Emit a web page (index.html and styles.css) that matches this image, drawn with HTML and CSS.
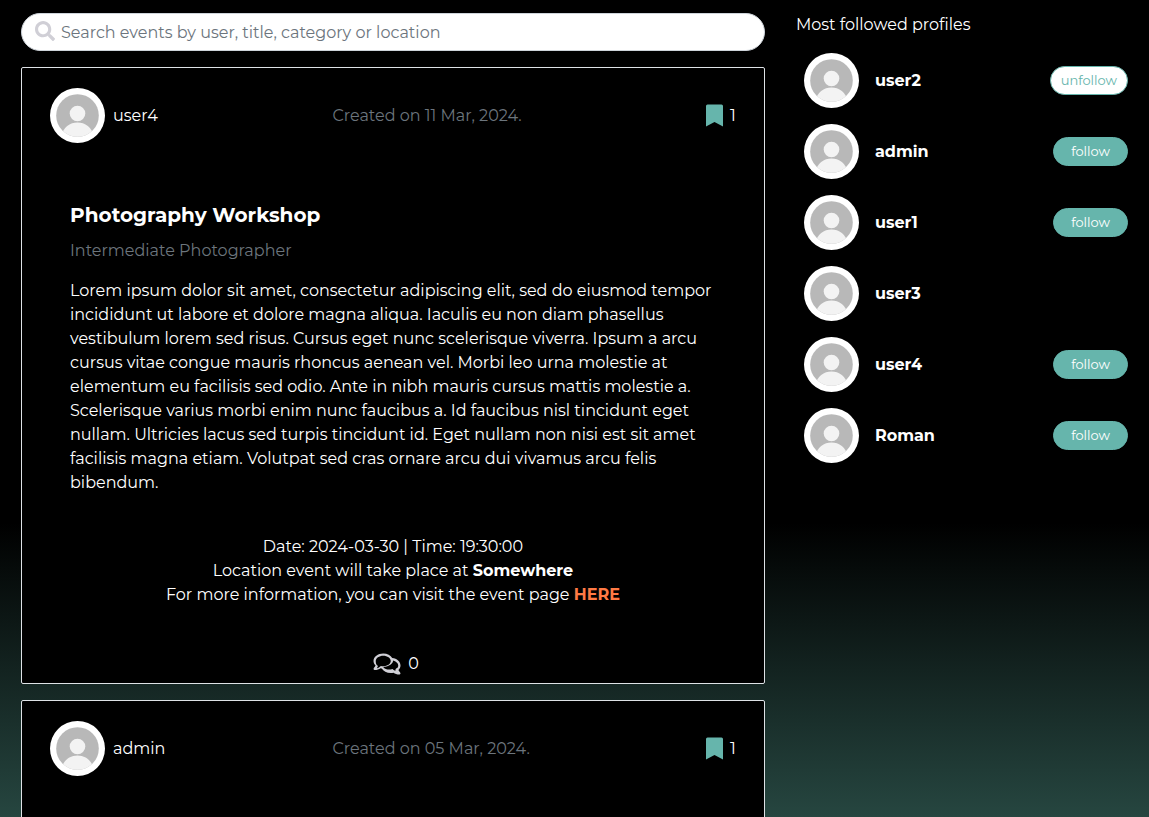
FILE: index.html
```html
<!DOCTYPE html>
<html lang="en">
<head>
<meta charset="utf-8">
<title>Events</title>
<link rel="stylesheet" href="styles.css">
</head>
<body>
<svg class="sprite" aria-hidden="true">
  <symbol id="avatar" viewBox="0 0 55 55">
    <clipPath id="disc"><circle cx="27.5" cy="27.5" r="21.3"/></clipPath>
    <circle cx="27.5" cy="27.5" r="27.5" fill="#fff"/>
    <circle cx="27.5" cy="27.5" r="21.3" fill="#b8b8b8"/>
    <g clip-path="url(#disc)" fill="#f3f3f3">
      <circle cx="27.5" cy="25.5" r="7.8"/>
      <path d="M11 49C13 39 20 34.5 27.5 34.5S42 39 44 49Z"/>
    </g>
  </symbol>
  <symbol id="bookmark" viewBox="0 0 17 23">
    <path d="M1.5 0.5H15.5Q17 0.5 17 2V22.5L8.5 18L0 22.5V2Q0 0.5 1.5 0.5Z" fill="currentColor"/>
  </symbol>
  <symbol id="comments" viewBox="0 0 576 512">
    <path fill="currentColor" d="M532 386.200c27.500-27.100 44-61.100 44-98.200 0-80-76.500-146.100-176.200-157.900C368.300 72.500 294.300 32 208 32 93.100 32 0 103.600 0 192c0 37 16.500 71 44 98.200-15.300 30.700-37.300 54.500-37.700 54.900-6.300 6.700-8.100 16.500-4.400 25 3.600 8.500 12 14 21.200 14 53.500 0 96.700-20.200 125.200-38.800 9.200 2.100 18.700 3.700 28.400 4.900C208.100 407.600 281.800 448 368 448c20.800 0 40.800-2.400 59.800-6.800C456.300 459.700 499.400 480 553 480c9.200 0 17.500-5.500 21.200-14 3.600-8.500 1.900-18.300-4.400-25-.4-.3-22.500-24.100-37.800-54.800zM142.200 311l-20.300 13.200c-16.800 10.800-33.900 19-51.200 24.200 3.200-5.500 6.400-11.300 9.500-17.400l15.500-31.200-24.800-24.600C57.300 261.500 48 231.200 48 192c0-60.700 73.300-112 160-112s160 51.300 160 112-73.300 112-160 112c-16.500 0-33-1.900-49-5.600zM480.700 352l-15.500 31.100c3.100 6.100 6.300 12 9.500 17.500-17.300-5.200-34.400-13.400-51.200-24.200l-17.200-11.200-20 4.600c-16 3.700-32.500 5.600-49 5.600-54 0-102.200-20.100-131.300-49.700C338 309.500 416 240.900 416 192c0-3.900-.4-7.700-.7-11.500C478.600 194.900 528 238 528 288c0 27.100-14.200 46.500-22.500 54.700z"/>
  </symbol>
  <symbol id="search" viewBox="0 0 512 512">
    <path fill="currentColor" d="M505 442.700L405.300 343c-4.500-4.500-10.600-7-17-7H372c27.600-35.300 44-79.700 44-128C416 93.100 322.900 0 208 0S0 93.100 0 208s93.100 208 208 208c48.300 0 92.700-16.400 128-44v16.300c0 6.400 2.500 12.500 7 17l99.700 99.700c9.400 9.400 24.600 9.400 33.900 0l28.300-28.300c9.400-9.400 9.400-24.600.1-34zM208 336c-70.700 0-128-57.200-128-128 0-70.700 57.200-128 128-128 70.700 0 128 57.200 128 128 0 70.700-57.200 128-128 128z"/>
  </symbol>
</svg>
<div class="page">
  <main class="feed">
    <form class="search" role="search">
      <svg class="search-icon" aria-hidden="true"><use href="#search"/></svg>
      <input class="search-input" type="text" aria-label="Search events" placeholder="Search events by user, title, category or location">
    </form>
    <article class="card">
      <header class="card-head">
        <a class="author" href="#"><svg class="avatar" aria-hidden="true"><use href="#avatar"/></svg>user4</a>
        <span class="created">Created on 11 Mar, 2024.</span>
        <button class="save" type="button" aria-label="Saved 1"><svg class="bookmark" aria-hidden="true"><use href="#bookmark"/></svg>1</button>
      </header>
      <div class="card-body">
        <h2 class="title">Photography Workshop</h2>
        <p class="subtitle">Intermediate Photographer</p>
        <p class="text">Lorem ipsum dolor sit amet, consectetur adipiscing elit, sed do eiusmod tempor incididunt ut labore et dolore magna aliqua. Iaculis eu non diam phasellus vestibulum lorem sed risus. Cursus eget nunc scelerisque viverra. Ipsum a arcu cursus vitae congue mauris rhoncus aenean vel. Morbi leo urna molestie at elementum eu facilisis sed odio. Ante in nibh mauris cursus mattis molestie a. Scelerisque varius morbi enim nunc faucibus a. Id faucibus nisl tincidunt eget nullam. Ultricies lacus sed turpis tincidunt id. Eget nullam non nisi est sit amet facilisis magna etiam. Volutpat sed cras ornare arcu dui vivamus arcu felis bibendum.</p>
      </div>
      <div class="details">
        <p>Date: 2024-03-30 | Time: 19:30:00</p>
        <p>Location event will take place at <strong>Somewhere</strong></p>
        <p>For more information, you can visit the event page <a class="here" href="#">HERE</a></p>
      </div>
      <footer class="card-foot">
        <a class="comments" href="#" aria-label="0 comments"><svg class="comments-icon" aria-hidden="true"><use href="#comments"/></svg>0</a>
      </footer>
    </article>
    <article class="card card-next">
      <header class="card-head">
        <a class="author" href="#"><svg class="avatar" aria-hidden="true"><use href="#avatar"/></svg>admin</a>
        <span class="created">Created on 05 Mar, 2024.</span>
        <button class="save" type="button" aria-label="Saved 1"><svg class="bookmark" aria-hidden="true"><use href="#bookmark"/></svg>1</button>
      </header>
    </article>
  </main>
  <aside class="profiles">
    <p class="profiles-title">Most followed profiles</p>
    <ul class="profile-list">
      <li class="profile"><a class="profile-link" href="#"><svg class="avatar" aria-hidden="true"><use href="#avatar"/></svg>user2</a><button class="pill pill-light" type="button">unfollow</button></li>
      <li class="profile"><a class="profile-link" href="#"><svg class="avatar" aria-hidden="true"><use href="#avatar"/></svg>admin</a><button class="pill" type="button">follow</button></li>
      <li class="profile"><a class="profile-link" href="#"><svg class="avatar" aria-hidden="true"><use href="#avatar"/></svg>user1</a><button class="pill" type="button">follow</button></li>
      <li class="profile"><a class="profile-link" href="#"><svg class="avatar" aria-hidden="true"><use href="#avatar"/></svg>user3</a></li>
      <li class="profile"><a class="profile-link" href="#"><svg class="avatar" aria-hidden="true"><use href="#avatar"/></svg>user4</a><button class="pill" type="button">follow</button></li>
      <li class="profile"><a class="profile-link" href="#"><svg class="avatar" aria-hidden="true"><use href="#avatar"/></svg>Roman</a><button class="pill" type="button">follow</button></li>
    </ul>
  </aside>
</div>
</body>
</html>
```
FILE: styles.css
```css
* { box-sizing: border-box; }
body {
  margin: 0;
  color: #fff;
  background: #000;
  font: 16px/24px Montserrat, Inter, sans-serif;
}
p, h2, ul { margin: 0; padding: 0; }
a { color: inherit; text-decoration: none; }
button, input { font: inherit; }
.sprite { position: absolute; width: 0; height: 0; }
.page {
  height: 100vh;
  overflow: hidden;
  padding: 13px 21px 0;
  display: grid;
  grid-template-columns: 56fr 25fr;
  column-gap: 31px;
  align-items: start;
  background: linear-gradient(#000 64%, #264640);
}
.feed { display: flex; flex-direction: column; gap: 16px; }
.search {
  display: flex;
  align-items: center;
  gap: 6px;
  height: 38px;
  padding: 0 13px;
  border: 1px solid #ced4da;
  border-radius: 19px;
  background: #fff;
}
.search-icon { width: 20px; height: 20px; color: #d0cfd6; flex: none; margin-bottom: 2px; }
.search-input { flex: 1; min-width: 0; border: 0; padding: 2px 0 0; outline: 0; background: none; color: #212529; }
.search-input::placeholder { color: #6c757d; opacity: 1; }
.card {
  display: flex;
  flex-direction: column;
  padding: 20px 28px 7px;
  border: 1px solid #dee2e6;
  border-radius: 2px;
  background: #000;
}
.card-next { min-height: 617px; }
.card-head { display: grid; grid-template-columns: 7fr 7fr 3fr; align-items: center; }
.author { display: flex; align-items: center; gap: 8px; line-height: 22px; padding-bottom: 0; }
.avatar { width: 55px; height: 55px; flex: none; }
.created { color: #6c757d; }
.save {
  justify-self: end;
  display: flex;
  align-items: center;
  gap: 7px;
  padding: 0;
  border: 0;
  background: none;
  color: #fff;
}
.bookmark { width: 17px; height: 23px; color: #66b5ac; }
.card-body { padding: 60px 20px 0; }
.title { font-size: 20px; line-height: 24px; font-weight: 700; }
.subtitle { margin-top: 12px; color: #6c757d; }
.text { margin-top: 16px; }
.details { padding-top: 40px; text-align: center; }
.here { color: #ff7a45; font-weight: 700; }
.card-foot { display: flex; justify-content: center; padding: 45px 0 0 6px; }
.comments { display: flex; align-items: center; gap: 7px; }
.comments-icon { width: 28px; height: 24px; color: #d0cfd6; }
.profiles-title { padding-bottom: 16px; }
.profile-list { display: flex; flex-direction: column; gap: 16px; list-style: none; }
.profile { display: flex; align-items: center; justify-content: space-between; padding-left: 8px; }
.profile-link { display: flex; align-items: center; gap: 16px; font-weight: 700; }
.pill {
  height: 29px;
  padding: 0 17px 2px;
  border: 1px solid #66b5ac;
  border-radius: 15px;
  background: #66b5ac;
  color: #fff;
  font-size: 13px;
  line-height: 16px;
}
.pill-light { padding: 0 10px 2px; background: #fff; color: #66b5ac; }
```
